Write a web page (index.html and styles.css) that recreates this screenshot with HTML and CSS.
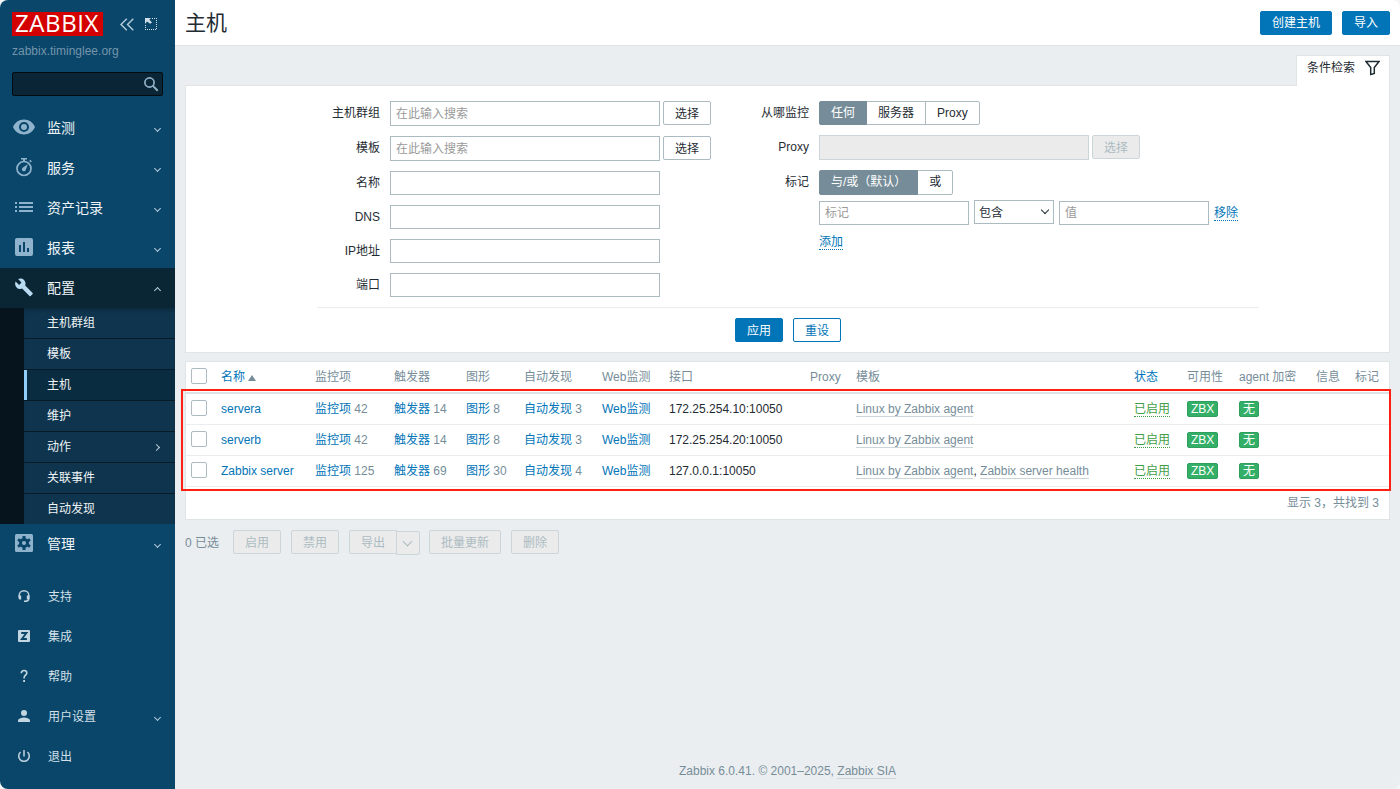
FILE: index.html
```
<!DOCTYPE html>
<html lang="zh-CN">
<head>
  <meta charset="UTF-8">
  <meta name="viewport" content="width=device-width, initial-scale=1.0">
  <title>主机</title>
  <link rel="stylesheet" href="styles.css">
</head>
<body>
  <div class="wrapper">
    <aside class="sidebar">
      <div class="sidebar-header">
        <div class="logo"><span>ZABBIX</span></div>
        <svg class="collapse" width="14" height="13" viewBox="0 0 14 13" fill="none" stroke="#b5ccda" stroke-width="1.4"><path d="M6.8.7 1 6.5l5.8 5.8M13.3.7 7.500 6.500l5.800 5.800"/></svg>
        <svg width="12" height="12" viewBox="0 0 12 12" fill="none" stroke="#cfdee7"><path d="M7 .5h5M11.500 2v10M.5 7v5M2 11.500h9" stroke-dasharray="1 1"/><path d="M0 0h6L4.300 1.700l2.700 2.700L5.200 5.800 2 3.500 0 6z" fill="#cfdee7" stroke="none"/></svg>
      </div>
      <div class="server-name">zabbix.timinglee.org</div>
      <div class="search">
        <svg width="16" height="16" viewBox="0 0 16 16" fill="none" stroke="#8fb0c6"><circle cx="6.500" cy="6.500" r="4.600" stroke-width="1.700"/><path d="m9.900 9.900 4.800 4.800" stroke-width="2"/></svg>
      </div>

      <ul class="menu">
        <li><a href="#">
          <svg class="icon" viewBox="0 0 24 24"><path d="M12 4.500C7 4.500 2.700 7.500 1 12c1.700 4.500 6 7.500 11 7.500s9.300-3 11-7.500c-1.700-4.500-6-7.500-11-7.500zm0 12.500a5 5 0 1 1 0-10 5 5 0 0 1 0 10zm0-8a3 3 0 1 0 0 6 3 3 0 0 0 0-6z"/></svg>
          <span>监测</span><i class="arrow"></i></a></li>
        <li><a href="#">
          <svg class="icon" viewBox="0 0 24 24"><circle cx="12" cy="13.500" r="7" fill="none" stroke="#8fb3cc" stroke-width="1.700"/><path d="M9 3h6v1.600h-2V6.500h-2V4.600H9zM17.200 6l1.200-1.200 1.400 1.400-1.200 1.200zM15.800 9.200l-1.900 5.300a2 2 0 1 1-3-2z"/></svg>
          <span>服务</span><i class="arrow"></i></a></li>
        <li><a href="#">
          <svg class="icon" viewBox="0 0 24 24"><path d="M3 7h2v2H3zm4 0h14v2H7zM3 11h2v2H3zm4 0h14v2H7zM3 15h2v2H3zm4 0h14v2H7z"/></svg>
          <span>资产记录</span><i class="arrow"></i></a></li>
        <li><a href="#">
          <svg class="icon" viewBox="0 0 24 24"><path fill-rule="evenodd" d="M5 3h14a2 2 0 0 1 2 2v14a2 2 0 0 1-2 2H5a2 2 0 0 1-2-2V5c0-1.100.9-2 2-2zm2 7v7h2v-7zm4-3v10h2V7zm4 6v4h2v-4z"/></svg>
          <span>报表</span><i class="arrow"></i></a></li>
        <li class="open"><a href="#">
          <svg class="icon" viewBox="0 0 24 24"><path d="m20.600 18-7.400-7.400c.7-1.900.3-4-1.200-5.500C10.400 3.500 8 3.200 6.100 4.100l3.400 3.400-2.400 2.400-3.500-3.400C2.700 8.500 3 10.800 4.600 12.400c1.500 1.500 3.700 1.900 5.500 1.200l7.400 7.400c.3.300.9.300 1.200 0l1.900-1.900c.4-.3.400-.8 0-1.100z"/></svg>
          <span>配置</span><i class="arrow"></i></a>
          <ul class="submenu">
            <li><a href="#">主机群组</a></li>
            <li><a href="#">模板</a></li>
            <li class="selected"><a href="#">主机</a></li>
            <li><a href="#">维护</a></li>
            <li><a href="#">动作<i class="arrow"></i></a></li>
            <li><a href="#">关联事件</a></li>
            <li><a href="#">自动发现</a></li>
          </ul>
        </li>
        <li><a href="#">
          <svg class="icon" viewBox="0 0 24 24"><rect x="3" y="3" width="18" height="18" rx="1.500"/><g fill="#0a466a"><circle cx="12" cy="12" r="5"/><path d="M10.500 5h3v14h-3zM5.200 9.800l1.500-2.600 12.100 7-1.500 2.600zM5.200 14.200l1.500 2.600 12.100-7-1.500-2.600z"/></g><circle cx="12" cy="12" r="2.100"/></svg>
          <span>管理</span><i class="arrow"></i></a></li>
      </ul>

      <ul class="menu menu-user">
        <li><a href="#">
          <svg class="icon" viewBox="0 0 24 24"><path d="M7.200 13v-1.500a4.800 4.800 0 0 1 9.600 0v3.300c0 1.700-1.200 2.400-3 2.500" fill="none" stroke="#c2d5e1" stroke-width="1.400"/><path d="M6.500 11.500h2.700v4H8c-.9 0-1.500-.6-1.500-1.500zM14.800 11.500h2.700V14c0 .9-.6 1.500-1.500 1.500h-1.200zM12 16.500h2.500V18H12z"/></svg>
          <span>支持</span></a></li>
        <li><a href="#">
          <svg class="icon" viewBox="0 0 24 24"><rect x="6" y="6" width="12" height="12" rx="1"/><path d="M9.200 9h5.200l-4.500 6h5" fill="none" stroke="#0a466a" stroke-width="1.900"/></svg>
          <span>集成</span></a></li>
        <li><a href="#">
          <svg class="icon" viewBox="0 0 24 24"><path d="M9.300 9.200c0-1.700 1-2.700 2.800-2.700s2.700 1 2.700 2.400c0 2.200-2.700 2.400-2.700 4.800v.8" fill="none" stroke="#c2d5e1" stroke-width="1.600"/><path d="M11.200 16H13v1.900h-1.800z"/></svg>
          <span>帮助</span></a></li>
        <li><a href="#">
          <svg class="icon" viewBox="0 0 24 24"><circle cx="12" cy="9" r="3"/><path d="M6 18v-1.500c0-2 4-3 6-3s6 1 6 3V18z"/></svg>
          <span>用户设置</span><i class="arrow"></i></a></li>
        <li><a href="#">
          <svg class="icon" viewBox="0 0 24 24"><path d="M8.500 8a5.300 5.300 0 1 0 7 0M12 6v6.500" fill="none" stroke="#c2d5e1" stroke-width="1.500"/></svg>
          <span>退出</span></a></li>
      </ul>
    </aside>

    <div class="page">
      <header class="header-title">
        <h1>主机</h1>
        <button class="btn primary">创建主机</button>
        <button class="btn primary">导入</button>
      </header>

      <main>
        <div class="filter-tab">
          <a href="#">条件检索
            <svg width="15" height="16" viewBox="0 0 15 16" fill="none" stroke="#1f2c33" stroke-width="1.500"><path d="M1 1.500h13L9.300 7.500v6l-3.600 1v-7z"/></svg>
          </a>
        </div>

        <section class="filter">
          <div class="filter-forms">
            <div class="form-grid">
              <label>主机群组</label>
              <div class="field tall"><input class="wide" type="text" placeholder="在此输入搜索"><button class="btn">选择</button></div>
              <label>模板</label>
              <div class="field tall"><input class="wide" type="text" placeholder="在此输入搜索"><button class="btn">选择</button></div>
              <label>名称</label>
              <div class="field"><input class="wide" type="text"></div>
              <label>DNS</label>
              <div class="field"><input class="wide" type="text"></div>
              <label>IP地址</label>
              <div class="field"><input class="wide" type="text"></div>
              <label>端口</label>
              <div class="field"><input class="wide" type="text"></div>
            </div>

            <div class="form-grid">
              <label>从哪监控</label>
              <div class="field"><div class="segmented"><span class="on">任何</span><span>服务器</span><span>Proxy</span></div></div>
              <label>Proxy</label>
              <div class="field tall"><input class="wide" type="text" disabled><button class="btn" disabled>选择</button></div>
              <label>标记</label>
              <div>
                <div class="segmented seg-tags"><span class="on">与/或（默认）</span><span>或</span></div>
                <div class="tag-row">
                  <input type="text" placeholder="标记">
                  <div class="select">包含<i class="arrow"></i></div>
                  <input type="text" placeholder="值">
                  <a class="link-dotted" href="#">移除</a>
                </div>
                <a class="link-dotted" href="#">添加</a>
              </div>
            </div>
          </div>
          <div class="filter-buttons">
            <button class="btn primary">应用</button>
            <button class="btn alt">重设</button>
          </div>
        </section>

        <section class="list">
          <table>
            <colgroup>
              <col class="c-check"><col class="c-name"><col class="c-items"><col class="c-triggers"><col class="c-graphs"><col class="c-discovery"><col class="c-web"><col class="c-interface"><col class="c-proxy"><col class="c-templates"><col class="c-status"><col class="c-avail"><col class="c-agent"><col class="c-info"><col class="c-tags">
            </colgroup>
            <thead>
              <tr>
                <th><span class="checkbox"></span></th>
                <th><a href="#">名称</a><i class="sort"></i></th>
                <th>监控项</th>
                <th>触发器</th>
                <th>图形</th>
                <th>自动发现</th>
                <th>Web监测</th>
                <th>接口</th>
                <th>Proxy</th>
                <th>模板</th>
                <th><a href="#">状态</a></th>
                <th>可用性</th>
                <th>agent 加密</th>
                <th>信息</th>
                <th>标记</th>
              </tr>
            </thead>
            <tbody>
              <tr>
                <td><span class="checkbox"></span></td>
                <td><a href="#">servera</a></td>
                <td><a href="#">监控项</a> <sup>42</sup></td>
                <td><a href="#">触发器</a> <sup>14</sup></td>
                <td><a href="#">图形</a> <sup>8</sup></td>
                <td><a href="#">自动发现</a> <sup>3</sup></td>
                <td><a href="#">Web监测</a></td>
                <td>172.25.254.10:10050</td>
                <td></td>
                <td><a class="tpl" href="#">Linux by Zabbix agent</a></td>
                <td><a class="enabled" href="#">已启用</a></td>
                <td><span class="tag">ZBX</span></td>
                <td><span class="tag">无</span></td>
                <td></td>
                <td></td>
              </tr>
              <tr>
                <td><span class="checkbox"></span></td>
                <td><a href="#">serverb</a></td>
                <td><a href="#">监控项</a> <sup>42</sup></td>
                <td><a href="#">触发器</a> <sup>14</sup></td>
                <td><a href="#">图形</a> <sup>8</sup></td>
                <td><a href="#">自动发现</a> <sup>3</sup></td>
                <td><a href="#">Web监测</a></td>
                <td>172.25.254.20:10050</td>
                <td></td>
                <td><a class="tpl" href="#">Linux by Zabbix agent</a></td>
                <td><a class="enabled" href="#">已启用</a></td>
                <td><span class="tag">ZBX</span></td>
                <td><span class="tag">无</span></td>
                <td></td>
                <td></td>
              </tr>
              <tr>
                <td><span class="checkbox"></span></td>
                <td><a href="#">Zabbix server</a></td>
                <td><a href="#">监控项</a> <sup>125</sup></td>
                <td><a href="#">触发器</a> <sup>69</sup></td>
                <td><a href="#">图形</a> <sup>30</sup></td>
                <td><a href="#">自动发现</a> <sup>4</sup></td>
                <td><a href="#">Web监测</a></td>
                <td>127.0.0.1:10050</td>
                <td></td>
                <td><a class="tpl" href="#">Linux by Zabbix agent</a>, <a class="tpl" href="#">Zabbix server health</a></td>
                <td><a class="enabled" href="#">已启用</a></td>
                <td><span class="tag">ZBX</span></td>
                <td><span class="tag">无</span></td>
                <td></td>
                <td></td>
              </tr>
            </tbody>
          </table>
          <div class="table-stats">显示 3，共找到 3</div>
          <div class="highlight"></div>
        </section>

        <div class="actions">
          <span class="count">0 已选</span>
          <button class="btn" disabled>启用</button>
          <button class="btn" disabled>禁用</button>
          <div class="split">
            <button class="btn" disabled>导出</button>
            <button class="btn more" disabled><i class="arrow"></i></button>
          </div>
          <button class="btn" disabled>批量更新</button>
          <button class="btn" disabled>删除</button>
        </div>
      </main>

      <footer>Zabbix 6.0.41. © 2001–2025, <a class="tpl" href="#">Zabbix SIA</a></footer>
    </div>
  </div>
</body>
</html>
```
FILE: styles.css
```
* {
  box-sizing: border-box;
}
html {
  background: #f3f5f6;
}
body {
  margin: 0;
  font-family: "Liberation Sans", "Noto Sans CJK SC", sans-serif;
  font-size: 12px;
  line-height: 16px;
  color: #1f2c33;
}
a {
  color: #0275b8;
  text-decoration: none;
}
ul {
  list-style: none;
  margin: 0;
  padding: 0;
}
button, input {
  font-family: inherit;
  font-size: 12px;
}
.wrapper {
  display: flex;
  height: 789px;
  border-radius: 8px;
  overflow: hidden;
  background: #ebeef0;
}

/* sidebar */
.sidebar {
  width: 175px;
  flex: none;
  background: #0a466a;
}
.sidebar-header {
  display: flex;
  align-items: center;
  padding: 12px 12px 0;
  height: 36px;
}
.logo {
  width: 91px;
  height: 24px;
  padding-left: 3px;
  font-family: "Open Sans", sans-serif;
  font-size: 24px;
  letter-spacing: 0.6px;
  line-height: 22px;
  color: #fff;
  background: #d40000;
}
.collapse {
  margin: 0 11px 0 17px;
}
.server-name {
  margin: 7px 12px 0;
  color: #7395ab;
}
.search {
  display: flex;
  align-items: center;
  justify-content: flex-end;
  height: 24px;
  margin: 13px 12px 12px;
  padding-right: 3px;
  background: #0a2636;
  border: 1px solid #020b10;
  border-radius: 2px;
}
.menu a {
  display: flex;
  align-items: center;
  height: 40px;
  padding: 0 12px;
  font-size: 14px;
  color: #eef4f7;
}
.menu .icon {
  flex: none;
  width: 24px;
  height: 24px;
  margin-right: 11px;
  margin-top: -2px;
  fill: #8fb3cc;
}
.menu .arrow {
  margin-left: auto;
  margin-right: 3px;
}
.arrow {
  width: 5px;
  height: 5px;
  border: solid #b5ccda;
  border-width: 0 1px 1px 0;
  transform: rotate(45deg);
}
.open > a {
  background: #0a2635;
}
.open .icon {
  fill: #b9dbf2;
}
.open > a .arrow {
  transform: translateY(2px) rotate(225deg);
}
.submenu {
  border-left: 24px solid #05141d;
  background: #0f344d;
  box-shadow: inset 0 4px 4px -3px #0a2635;
}
.submenu li + li {
  border-top: 1px solid #061a27;
}
.submenu a {
  height: 30px;
  padding-left: 23px;
  font-size: 12px;
}
.submenu .selected a {
  background: #0a2c40;
  border-left: 3px solid #8fcdfb;
  padding-left: 20px;
}
.submenu .arrow {
  margin-right: 4px;
  transform: rotate(-45deg);
}
.menu-user {
  margin-top: 13px;
}
.menu-user a {
  font-size: 12px;
  color: #d3e0e8;
}
.menu-user .icon {
  margin-right: 12px;
  fill: #c2d5e1;
}

/* page */
.page {
  flex: 1;
  display: flex;
  flex-direction: column;
}
.header-title {
  display: flex;
  align-items: center;
  gap: 10px;
  height: 46px;
  padding: 0 10px;
  background: #fff;
  border-bottom: 1px solid #dfe4e7;
}
h1 {
  flex: 1;
  margin: 0;
  font-size: 21px;
  font-weight: 400;
  line-height: 30px;
}
.btn {
  height: 24px;
  padding: 2px 11px 0;
  line-height: 20px;
  color: #1f2c33;
  background: #fff;
  border: 1px solid #acbbc2;
  border-radius: 2px;
}
.btn.primary {
  color: #fff;
  background: #0275b8;
  border-color: #0275b8;
}
.header-title .btn {
  padding-top: 0;
}
.btn.alt {
  color: #0275b8;
  border-color: #0275b8;
}
.btn:disabled {
  color: #acbbc2;
  background: #ebebeb;
  border-color: #ccd5d9;
}
main {
  flex: 1;
  padding: 9px 10px 0;
}

/* filter */
.filter-tab {
  display: flex;
  justify-content: flex-end;
}
.filter-tab a {
  position: relative;
  z-index: 1;
  display: flex;
  align-items: center;
  gap: 10px;
  height: 31px;
  margin-bottom: -1px;
  padding: 0 9px 6px 10px;
  color: #1f2c33;
  background: #fff;
  border: 1px solid #dfe4e7;
  border-bottom: 0;
}
.filter {
  height: 268px;
  padding: 15px 130px 0 131px;
  background: #fff;
  border: 1px solid #dfe4e7;
}
.filter-forms {
  display: flex;
  height: 207px;
  border-bottom: 1px solid #ebeef0;
}
.form-grid {
  display: grid;
  grid-template-columns: 63px auto;
  gap: 10px;
  align-content: start;
  width: 429px;
}
.form-grid label {
  text-align: right;
  line-height: 24px;
}
.field {
  display: flex;
  gap: 3px;
  height: 24px;
}
.field.tall {
  height: 25px;
}
input {
  height: 24px;
  width: 150px;
  padding: 0 5px;
  color: #1f2c33;
  background: #fff;
  border: 1px solid #acbbc2;
  border-radius: 0;
}
input.wide {
  width: 270px;
  height: 100%;
}
input::placeholder {
  color: #9a9a9a;
}
input:disabled {
  background: #ebebeb;
  border-color: #ccd5d9;
}
.segmented {
  display: flex;
  width: max-content;
  height: 24px;
  line-height: 22px;
}
.segmented span {
  padding: 0 11px;
  margin-left: -1px;
  border: 1px solid #acbbc2;
}
.segmented span:first-child {
  margin-left: 0;
  border-radius: 2px 0 0 2px;
}
.segmented span:last-child {
  border-radius: 0 2px 2px 0;
}
.segmented .on {
  position: relative;
  color: #fff;
  background: #768d99;
  border-color: #768d99;
}
.seg-tags {
  height: 25px;
}
.tag-row {
  display: flex;
  gap: 5px;
  margin: 6px 0 9px;
  white-space: nowrap;
}
.tag-row .link-dotted {
  align-self: center;
}
.select {
  display: flex;
  align-items: center;
  justify-content: space-between;
  width: 80px;
  height: 24px;
  margin-top: -1px;
  padding: 2px 5px 0 4px;
  border: 1px solid #acbbc2;
}
.select .arrow {
  width: 6px;
  height: 6px;
  border-color: #1f2c33;
  transform: translateY(-3px) rotate(45deg);
}
.link-dotted {
  display: inline-block;
  height: 16px;
  line-height: 17px;
  border-bottom: 1px dotted #0275b8;
}
.filter-buttons {
  display: flex;
  justify-content: center;
  gap: 10px;
  padding-top: 10px;
}

/* hosts table */
.list {
  position: relative;
  height: 159px;
  margin-top: 8px;
  background: #fff;
  border: 1px solid #dfe4e7;
}
table {
  width: 100%;
  table-layout: fixed;
  border-collapse: separate;
  border-spacing: 0;
}
th, td {
  height: 31px;
  padding: 0 0 0 5px;
  text-align: left;
  font-weight: 400;
  white-space: nowrap;
  border-bottom: 1px solid #ebeef0;
}
th {
  height: 32px;
  color: #768d99;
  border-bottom: 2px solid #dce2e5;
}
.c-check { width: 30px; }
.c-name { width: 94px; }
.c-items { width: 79px; }
.c-triggers { width: 72px; }
.c-graphs { width: 58px; }
.c-discovery { width: 78px; }
.c-web { width: 67px; }
.c-interface { width: 141px; }
.c-proxy { width: 46px; }
.c-templates { width: 278px; }
.c-status { width: 53px; }
.c-avail { width: 52px; }
.c-agent { width: 77px; }
.c-info { width: 39px; }
.c-tags { width: 39px; }
.checkbox {
  display: block;
  width: 16px;
  height: 16px;
  margin-top: -2px;
  background: #fff;
  border: 1px solid #acbbc2;
  border-radius: 2px;
}
.sort {
  display: inline-block;
  margin-left: 3px;
  border: 4px solid transparent;
  border-top: 0;
  border-bottom: 6px solid #768d99;
}
sup {
  font-size: 12px;
  line-height: 1;
  vertical-align: baseline;
  color: #768d99;
}
.tpl {
  color: #768d99;
  border-bottom: 1px solid #ccd5d9;
}
.enabled {
  display: inline-block;
  height: 15px;
  line-height: 15px;
  color: #429e47;
  border-bottom: 1px dotted #429e47;
}
.tag {
  display: inline-block;
  height: 16px;
  padding: 0 3px;
  line-height: 14px;
  color: #fff;
  background: #34af67;
  border: 1px solid #2f9f5e;
  border-radius: 2px;
  vertical-align: middle;
}
.table-stats {
  padding: 8px 10px 0;
  text-align: right;
  color: #768d99;
}
.highlight {
  position: absolute;
  top: 27px;
  left: -5px;
  width: 1210px;
  height: 102px;
  border: 2px solid #ff1f10;
}

/* bottom buttons */
.actions {
  display: flex;
  align-items: center;
  gap: 10px;
  margin-top: 10px;
  color: #768d99;
}
.count {
  margin: 1px 4px 0 0;
}
.split {
  display: flex;
  margin-right: -1px;
}
.split .btn:first-child {
  border-radius: 2px 0 0 2px;
}
.btn.more {
  width: 24px;
  margin: 1px 0 -1px -1px;
  padding: 0 7px;
  border-radius: 0 2px 2px 0;
}
.more .arrow {
  display: block;
  width: 7px;
  height: 7px;
  border-color: #acbbc2;
  transform: translateY(-2px) rotate(45deg);
}
footer {
  padding-bottom: 10px;
  text-align: center;
  color: #768d99;
}
```
